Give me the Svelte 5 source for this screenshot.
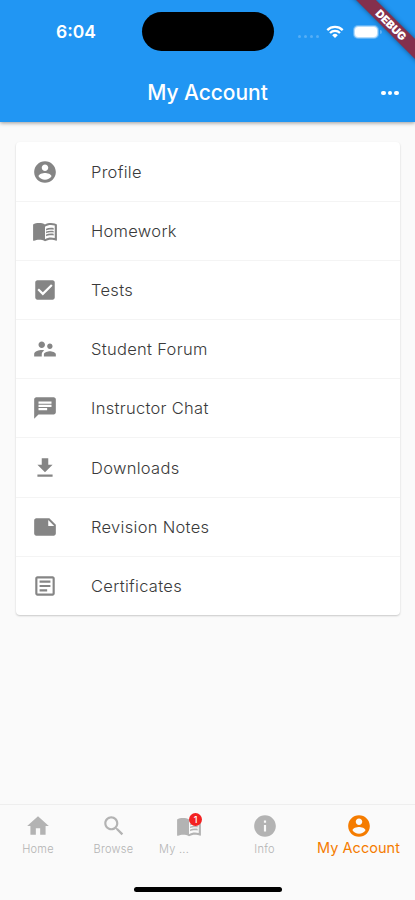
<script lang="ts">
  type Row = { label: string; icon: string };

  const icons: Record<string, string> = {
    account: 'M12 2C6.48 2 2 6.48 2 12s4.48 10 10 10 10-4.48 10-10S17.52 2 12 2zm0 3c1.66 0 3 1.34 3 3s-1.34 3-3 3-3-1.34-3-3 1.34-3 3-3zm0 14.2c-2.5 0-4.71-1.28-6-3.22.03-1.99 4-3.08 6-3.08 1.99 0 5.97 1.09 6 3.08-1.29 1.94-3.5 3.22-6 3.22z',
    book: 'M21 5c-1.11-.35-2.33-.5-3.5-.5-1.95 0-4.05.4-5.5 1.5-1.45-1.1-3.55-1.5-5.5-1.5S2.45 4.9 1 6v14.65c0 .25.25.5.5.5.1 0 .15-.05.25-.05C3.1 20.45 5.05 20 6.5 20c1.95 0 4.05.4 5.5 1.5 1.35-.85 3.8-1.5 5.5-1.5 1.65 0 3.35.3 4.75 1.05.1.05.15.05.25.05.25 0 .5-.25.5-.5V6c-.6-.45-1.25-.75-2-1zm0 13.5c-1.1-.35-2.3-.5-3.5-.5-1.7 0-4.15.65-5.5 1.5V8c1.35-.85 3.8-1.5 5.5-1.5 1.2 0 2.4.15 3.5.5v11.5zM17.5 10.5c.88 0 1.73.09 2.5.26V9.24c-.79-.15-1.64-.24-2.5-.24-1.7 0-3.24.29-4.5.83v1.66c1.13-.64 2.7-.99 4.5-.99zM13 12.49v1.66c1.13-.64 2.7-.99 4.5-.99.88 0 1.73.09 2.5.26V11.9c-.79-.15-1.64-.24-2.5-.24-1.7 0-3.24.3-4.5.83zM17.5 14.33c-1.7 0-3.24.29-4.5.83v1.66c1.13-.64 2.7-.99 4.5-.99.88 0 1.73.09 2.5.26v-1.52c-.79-.16-1.64-.24-2.5-.24z',
    check: 'M19 3H5c-1.11 0-2 .9-2 2v14c0 1.1.89 2 2 2h14c1.11 0 2-.9 2-2V5c0-1.1-.89-2-2-2zm-9 14l-5-5 1.41-1.41L10 14.17l7.59-7.59L19 8l-9 9z',
    people: 'M16.5 12c1.38 0 2.49-1.12 2.49-2.5S17.88 7 16.5 7C15.12 7 14 8.12 14 9.5s1.12 2.5 2.5 2.5zM9 11c1.66 0 2.99-1.34 2.99-3S10.66 5 9 5C7.34 5 6 6.34 6 8s1.34 3 3 3zm7.5 3c-1.83 0-5.5.92-5.5 2.75V19h11v-2.25c0-1.83-3.67-2.75-5.5-2.75zM9 13c-2.33 0-7 1.17-7 3.5V19h7v-2.25c0-.85.33-2.34 2.37-3.47C10.5 13.1 9.66 13 9 13z',
    chat: 'M20 2H4c-1.1 0-1.99.9-1.99 2L2 22l4-4h14c1.1 0 2-.9 2-2V4c0-1.1-.9-2-2-2zM6 9h12v2H6V9zm8 5H6v-2h8v2zm4-6H6V6h12v2z',
    download: 'M19 9h-4V3H9v6H5l7 7 7-7zM5 18v2h14v-2H5z',
    note: 'M22 10l-6-6H4c-1.1 0-2 .9-2 2v12.01c0 1.1.9 1.99 2 1.99l16-.01c1.1 0 2-.89 2-1.99v-8zm-7-4.5l5.5 5.5H15V5.5z',
    article: 'M19 5v14H5V5h14m0-2H5c-1.1 0-2 .9-2 2v14c0 1.1.9 2 2 2h14c1.1 0 2-.9 2-2V5c0-1.1-.9-2-2-2zM14 17H7v-2h7v2zm3-4H7v-2h10v2zm0-4H7V7h10v2z',
    home: 'M10 20v-6h4v6h5v-8h3L12 3 2 12h3v8z',
    search: 'M15.5 14h-.79l-.28-.27C15.41 12.59 16 11.11 16 9.5 16 5.91 13.09 3 9.5 3S3 5.91 3 9.5 5.91 16 9.5 16c1.61 0 3.09-.59 4.23-1.57l.27.28v.79l5 4.99L20.49 19l-4.99-5zm-6 0C7.01 14 5 11.99 5 9.5S7.01 5 9.5 5 14 7.01 14 9.5 11.99 14 9.5 14z',
    info: 'M12 2C6.48 2 2 6.48 2 12s4.48 10 10 10 10-4.48 10-10S17.52 2 12 2zm1 15h-2v-6h2v6zm0-8h-2V7h2v2z',
  };

  const rows: Row[] = [
    { label: 'Profile', icon: 'account' },
    { label: 'Homework', icon: 'book' },
    { label: 'Tests', icon: 'check' },
    { label: 'Student Forum', icon: 'people' },
    { label: 'Instructor Chat', icon: 'chat' },
    { label: 'Downloads', icon: 'download' },
    { label: 'Revision Notes', icon: 'note' },
    { label: 'Certificates', icon: 'article' },
  ];

  const tabs = [
    { label: 'Home', icon: 'home' },
    { label: 'Browse', icon: 'search' },
    { label: 'My ...', icon: 'book', badge: 1 },
    { label: 'Info', icon: 'info' },
    { label: 'My Account', icon: 'account' },
  ];

  let active = $state('My Account');
</script>

{#snippet icon(name: string)}
  <svg class="icon" viewBox="0 0 24 24" aria-hidden="true"><path d={icons[name]} /></svg>
{/snippet}

<div class="screen">
  <header>
    <div class="status">
      <span class="time">6:04</span>
      <div class="island"></div>
      <div class="signals">
        <div class="dots"><i></i><i></i><i></i><i></i></div>
        <svg class="wifi" viewBox="0 0 18 14" aria-hidden="true">
          <path d="M1.3 5.1a11 11 0 0 1 15.4 0M4 8a7.1 7.1 0 0 1 10 0" />
          <path class="tip" d="M6.2 10.2a4 4 0 0 1 5.6 0L9 13z" />
        </svg>
        <div class="battery"></div>
        <div class="nub"></div>
      </div>
    </div>
    <div class="bar">
      <h1>My Account</h1>
      <button class="more" aria-label="More"><i></i><i></i><i></i></button>
    </div>
    <div class="debug">DEBUG</div>
  </header>

  <main>
    <ul class="card">
      {#each rows as row}
        <li>
          {@render icon(row.icon)}
          <span>{row.label}</span>
        </li>
      {/each}
    </ul>
  </main>

  <nav>
    {#each tabs as tab}
      <button class="tab" class:active={active === tab.label} onclick={() => (active = tab.label)}>
        <span class="glyph">
          {@render icon(tab.icon)}
          {#if tab.badge}<span class="badge">{tab.badge}</span>{/if}
        </span>
        <span class="label" class:cut={tab.badge}>{tab.label}</span>
      </button>
    {/each}
  </nav>
  <div class="home-bar"></div>
</div>

<style>
  :global(body) { margin: 0; }
  .screen {
    width: 415px; height: 900px;
    display: flex; flex-direction: column;
    background: #fafafa;
    font-family: Inter, Roboto, sans-serif;
    overflow: hidden;
  }
  button { border: 0; padding: 0; margin: 0; background: none; font: inherit; }
  .icon { display: block; width: 26px; height: 26px; fill: currentColor; flex: none; }

  header {
    position: relative;
    height: 122px; flex: none;
    background: #2196f3; color: #fff;
    box-shadow: 0 1px 4px rgba(0, 0, 0, .4);
    clip-path: inset(0 0 -10px 0);
  }
  .status {
    display: grid; grid-template-columns: 142px 132px 1fr;
    align-items: center; height: 63px;
  }
  .time { padding-left: 56px; font-size: 17.5px; font-weight: 600; }
  .island { height: 39px; border-radius: 20px; background: #000; }
  .signals { display: flex; align-items: center; padding-left: 24px; }
  .dots { display: flex; gap: 3px; padding-top: 9px; }
  .dots i { width: 3px; height: 3px; border-radius: 50%; background: #55aef6; }
  .wifi { width: 18px; height: 14px; margin-left: 7px; fill: none; stroke: #fff; stroke-width: 2.3; }
  .tip { fill: #fff; stroke: none; }
  .battery {
    width: 22px; height: 10px; margin-left: 10px;
    border: 1px solid #b5dcfb; border-radius: 4px;
    background: #fff;
    box-shadow: 0 0 0 1px #5fb3f6;
  }
  .nub { width: 2px; height: 4px; margin-left: 2px; border-radius: 0 2px 2px 0; background: #5fb3f6; }
  .bar {
    height: 60px;
    display: grid; grid-template-columns: 50px 1fr 50px; align-items: center;
  }
  h1 { grid-column: 2; margin: 0; text-align: center; font-size: 21px; font-weight: 500; line-height: 26px; letter-spacing: -.05px; }
  .more { display: flex; gap: 2px; justify-content: center; color: #fff; }
  .more i { width: 4.6px; height: 4.6px; border-radius: 50%; background: #fff; }
  .debug {
    position: absolute; left: 331px; top: 18px;
    width: 120px; height: 14px;
    transform: rotate(45deg);
    background: #84304d; color: #fff;
    box-shadow: 0 0 5px rgba(0, 0, 0, .45);
    text-align: center; font-size: 11px; line-height: 14px; font-weight: 900;
  }

  main { flex: 1; padding: 20px 15px 0 16px; }
  .card {
    list-style: none; margin: 0; padding: 1px 0 0;
    background: #fff; border-radius: 4px;
    box-shadow: 0 1px 2px rgba(0, 0, 0, .2);
  }
  li {
    box-sizing: border-box; height: 59.1px;
    display: flex; align-items: center; gap: 33px; padding-left: 16px;
    color: #858585;
    border-bottom: 1px solid #f4f4f4;
  }
  li:last-child { height: 58.5px; border-bottom: 0; }
  li span { color: #3a3a3a; font-size: 16.5px; font-weight: 350; letter-spacing: .3px; }

  nav {
    box-sizing: border-box; height: 61px;
    display: grid; grid-template-columns: 76px 75px 76px 75px 113px;
    border-top: 1px solid #eee;
    color: #b3b3b3;
  }
  .tab { display: flex; flex-direction: column; align-items: center; justify-content: flex-start; padding-top: 8px; color: inherit; }
  .glyph { position: relative; }
  .label { margin-top: 3px; font-size: 11px; line-height: 14px; font-weight: 350; letter-spacing: .25px; }
  .cut { width: 30px; margin-right: 30px; white-space: nowrap; }
  .active { color: #f57c00; }
  .active .label { margin-top: 0; font-size: 14.5px; line-height: 17px; font-weight: 400; letter-spacing: .05px; }
  .badge {
    position: absolute; right: 0; top: 0;
    width: 13px; height: 13px; border-radius: 50%;
    background: #f32121; color: #fff;
    font-size: 9px; font-weight: 500; line-height: 13px; text-align: center;
  }
  .home-bar { width: 148px; height: 5px; margin: 22px auto 8px; border-radius: 3px; background: #000; flex: none; }
</style>
